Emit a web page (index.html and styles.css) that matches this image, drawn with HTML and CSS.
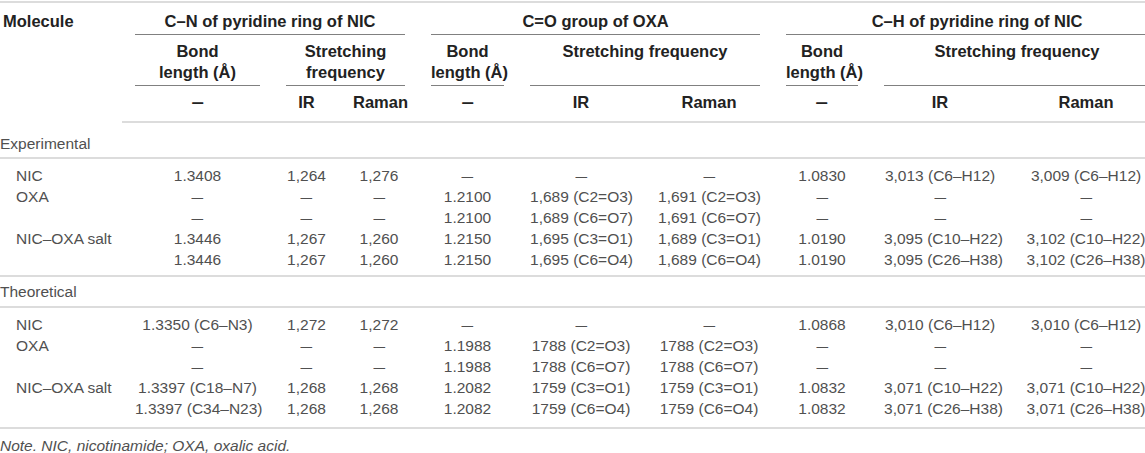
FILE: index.html
```html
<!DOCTYPE html>
<html lang="en">
<head>
    <meta charset="UTF-8">
    <title>Bond lengths and stretching frequencies of NIC–OXA salt</title>
    <link rel="stylesheet" href="styles.css">
</head>
<body>
    <div class="table-wrap">
        <table class="data">
            <colgroup>
                <col class="c-mol">
                <col class="c-bond1">
                <col class="c-ir1">
                <col class="c-ra1">
                <col class="c-bond2">
                <col class="c-ir2">
                <col class="c-ra2">
                <col class="c-bond3">
                <col class="c-ir3">
                <col class="c-ra3">
            </colgroup>
            <thead>
                <tr class="head-groups">
                    <th class="mol" rowspan="3">Molecule</th>
                    <th colspan="3"><div class="rule">C–N of pyridine ring of NIC</div></th>
                    <th colspan="3"><div class="rule">C=O group of OXA</div></th>
                    <th colspan="3" class="last-group"><div class="rule">C–H of pyridine ring of NIC</div></th>
                </tr>
                <tr class="head-sub">
                    <th><div class="rule">Bond<br>length (Å)</div></th>
                    <th colspan="2"><div class="rule">Stretching<br>frequency</div></th>
                    <th><div class="rule">Bond<br>length (Å)</div></th>
                    <th colspan="2"><div class="rule">Stretching frequency</div></th>
                    <th><div class="rule">Bond<br>length (Å)</div></th>
                    <th colspan="2"><div class="rule">Stretching frequency</div></th>
                </tr>
                <tr class="head-units">
                    <th><span class="dash">–</span></th>
                    <th>IR</th>
                    <th>Raman</th>
                    <th><span class="dash">–</span></th>
                    <th>IR</th>
                    <th>Raman</th>
                    <th><span class="dash">–</span></th>
                    <th>IR</th>
                    <th>Raman</th>
                </tr>
            </thead>
            <tbody>
                <tr class="section">
                    <td colspan="10">Experimental</td>
                </tr>
                <tr class="first">
                    <td class="name">NIC</td>
                    <td>1.3408</td><td>1,264</td><td>1,276</td>
                    <td><span class="dash">–</span></td><td><span class="dash">–</span></td><td><span class="dash">–</span></td>
                    <td>1.0830</td><td>3,013 (C6–H12)</td><td>3,009 (C6–H12)</td>
                </tr>
                <tr>
                    <td class="name">OXA</td>
                    <td><span class="dash">–</span></td><td><span class="dash">–</span></td><td><span class="dash">–</span></td>
                    <td>1.2100</td><td>1,689 (C2=O3)</td><td>1,691 (C2=O3)</td>
                    <td><span class="dash">–</span></td><td><span class="dash">–</span></td><td><span class="dash">–</span></td>
                </tr>
                <tr>
                    <td class="name"></td>
                    <td><span class="dash">–</span></td><td><span class="dash">–</span></td><td><span class="dash">–</span></td>
                    <td>1.2100</td><td>1,689 (C6=O7)</td><td>1,691 (C6=O7)</td>
                    <td><span class="dash">–</span></td><td><span class="dash">–</span></td><td><span class="dash">–</span></td>
                </tr>
                <tr>
                    <td class="name">NIC–OXA salt</td>
                    <td>1.3446</td><td>1,267</td><td>1,260</td>
                    <td>1.2150</td><td>1,695 (C3=O1)</td><td>1,689 (C3=O1)</td>
                    <td>1.0190</td><td>3,095 (C10–H22)</td><td>3,102 (C10–H22)</td>
                </tr>
                <tr class="last">
                    <td class="name"></td>
                    <td>1.3446</td><td>1,267</td><td>1,260</td>
                    <td>1.2150</td><td>1,695 (C6=O4)</td><td>1,689 (C6=O4)</td>
                    <td>1.0190</td><td>3,095 (C26–H38)</td><td>3,102 (C26–H38)</td>
                </tr>

                <tr class="section second">
                    <td colspan="10">Theoretical</td>
                </tr>
                <tr class="first">
                    <td class="name">NIC</td>
                    <td>1.3350 (C6–N3)</td><td>1,272</td><td>1,272</td>
                    <td><span class="dash">–</span></td><td><span class="dash">–</span></td><td><span class="dash">–</span></td>
                    <td>1.0868</td><td>3,010 (C6–H12)</td><td>3,010 (C6–H12)</td>
                </tr>
                <tr>
                    <td class="name">OXA</td>
                    <td><span class="dash">–</span></td><td><span class="dash">–</span></td><td><span class="dash">–</span></td>
                    <td>1.1988</td><td>1788 (C2=O3)</td><td>1788 (C2=O3)</td>
                    <td><span class="dash">–</span></td><td><span class="dash">–</span></td><td><span class="dash">–</span></td>
                </tr>
                <tr>
                    <td class="name"></td>
                    <td><span class="dash">–</span></td><td><span class="dash">–</span></td><td><span class="dash">–</span></td>
                    <td>1.1988</td><td>1788 (C6=O7)</td><td>1788 (C6=O7)</td>
                    <td><span class="dash">–</span></td><td><span class="dash">–</span></td><td><span class="dash">–</span></td>
                </tr>
                <tr>
                    <td class="name">NIC–OXA salt</td>
                    <td>1.3397 (C18–N7)</td><td>1,268</td><td>1,268</td>
                    <td>1.2082</td><td>1759 (C3=O1)</td><td>1759 (C3=O1)</td>
                    <td>1.0832</td><td>3,071 (C10–H22)</td><td>3,071 (C10–H22)</td>
                </tr>
                <tr class="last end">
                    <td class="name"></td>
                    <td>1.3397 (C34–N23)</td><td>1,268</td><td>1,268</td>
                    <td>1.2082</td><td>1759 (C6=O4)</td><td>1759 (C6=O4)</td>
                    <td>1.0832</td><td>3,071 (C26–H38)</td><td>3,071 (C26–H38)</td>
                </tr>
            </tbody>
        </table>
        <p class="note">Note. NIC, nicotinamide; OXA, oxalic acid.</p>
    </div>
</body>
</html>
```

FILE: styles.css
```css
* {
    margin: 0;
    padding: 0;
    box-sizing: border-box;
}

html, body {
    overflow: hidden;
}

body {
    font-family: 'Liberation Sans', Arial, sans-serif;
    font-size: 15.5px;
    background: #fff;
    color: #505050;
}

.table-wrap {
    width: 1145px;
    overflow: hidden;
    padding-top: 1px;
}

.data {
    width: 1163px;
    table-layout: fixed;
    border-collapse: separate;
    border-spacing: 0;
    border-top: 2px solid #dcdcdc;
    line-height: 21px;
}

.c-mol { width: 122px; }
.c-bond1 { width: 151px; }
.c-ir1 { width: 67px; }
.c-ra1 { width: 78px; }
.c-bond2 { width: 99px; }
.c-ir2 { width: 128px; }
.c-ra2 { width: 128px; }
.c-bond3 { width: 98px; }
.c-ir3 { width: 138px; }
.c-ra3 { width: 154px; }

.dash {
    display: inline-block;
    transform: scaleX(1.35);
}

/* header */
th {
    font-size: 16.5px;
    font-weight: 700;
    color: #222;
    text-align: center;
    vertical-align: top;
    padding: 0 13px;
    white-space: nowrap;
}

th .rule {
    border-bottom: 1px solid #808080;
    padding-bottom: 2px;
}

th.mol {
    text-align: left;
    padding: 8px 0 0 3px;
}

.head-groups th {
    padding-top: 8px;
}

.last-group .rule {
    padding-left: 18px;
}

.head-sub th {
    padding-top: 6px;
}

.head-sub .rule {
    height: 45px;
}

.head-units th {
    padding-top: 6px;
    padding-bottom: 8px;
    border-bottom: 2px solid #dcdcdc;
}

/* body */
td {
    text-align: center;
    white-space: nowrap;
    padding: 0 13px;
}

td.name {
    text-align: left;
    padding-left: 16px;
}

.section td {
    text-align: left;
    padding: 10px 0 3px 0;
    border-bottom: 2px solid #dcdcdc;
}

.section.second td {
    padding: 4px 0 4px 0;
}

.first td {
    padding-top: 6px;
}

.last td {
    padding-bottom: 5px;
    border-bottom: 2px solid #dcdcdc;
}

.last.end td {
    padding-bottom: 8px;
}

.note {
    font-style: italic;
    color: #505050;
    line-height: 14px;
    padding-top: 10px;
}
```
